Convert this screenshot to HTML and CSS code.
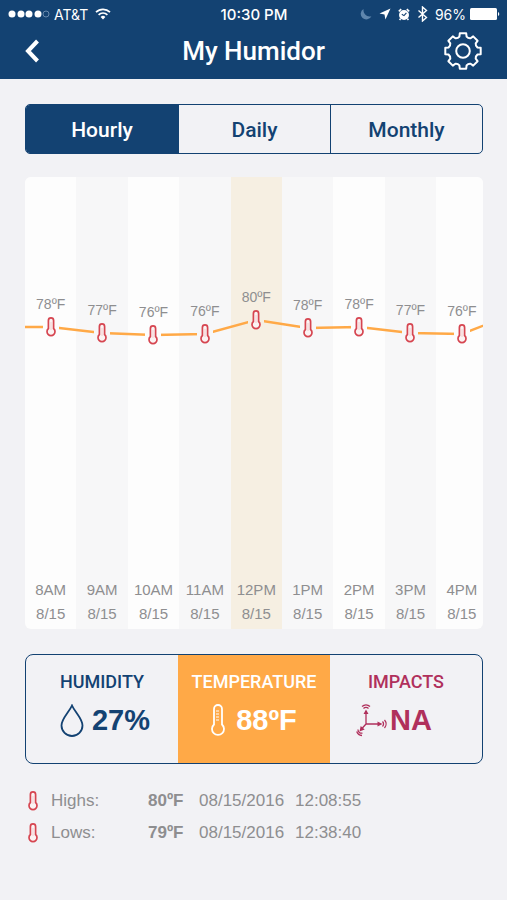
FILE: index.html
```html
<!DOCTYPE html>
<html lang="en">
<head>
  <meta charset="UTF-8">
  <meta name="viewport" content="width=device-width, initial-scale=1.0">
  <title>My Humidor</title>
  <link rel="stylesheet" href="styles.css">
</head>
<body>
  <!-- Shared thermometer icon -->
  <svg class="symbols" aria-hidden="true">
    <symbol id="thermometer" viewBox="0 0 10 20">
      <path d="M2.4 11.500V3.500a2.600 2.600 0 0 1 5.200 0V11.500a4 4 0 1 1-5.200 0z" fill="#fbf3f3" stroke="currentColor" stroke-width="1.7"/>
      <path d="M5 5v8" stroke="currentColor" stroke-width="0.8" opacity="0.25"/>
    </symbol>
  </svg>

  <header>
    <div class="status-bar">
      <div class="status-left">
        <svg width="42" height="10" viewBox="0 0 42 10" fill="#fff">
          <circle cx="4" cy="5" r="3.5"/><circle cx="13" cy="5" r="3.5"/><circle cx="21" cy="5" r="3.5"/><circle cx="30" cy="5" r="3.5"/>
          <circle cx="38" cy="5" r="3" fill="none" stroke="#7d9cbc" stroke-width="0.8"/>
        </svg>
        <span>AT&amp;T</span>
        <svg class="wifi" width="16" height="12" viewBox="0 0 16 12" fill="none" stroke="#fff" stroke-width="1.7">
          <path d="M1 4.2a10 10 0 0 1 14 0M3.6 6.8a6.3 6.3 0 0 1 8.8 0"/>
          <path d="M8 11.5 5.6 9a3.5 3.5 0 0 1 4.8 0z" fill="#fff" stroke="none"/>
        </svg>
      </div>
      <span class="status-time">10:30 PM</span>
      <div class="status-right">
        <svg width="12" height="12" viewBox="0 0 12 12"><path d="M3.500 1A5.600 5.600 0 1 0 11.400 8.200C7 9.600 3 6 3.500 1z" fill="#5f86ad"/></svg>
        <svg width="12" height="12" viewBox="0 0 12 12"><path d="M11.500.5.5 5.600l5 .9.9 5z" fill="#fff"/></svg>
        <svg width="12" height="13" viewBox="0 0 12 13">
          <circle cx="6" cy="7" r="5" fill="#fff"/>
          <path d="M.8 3.4 3.2 1.2M11.2 3.4 8.8 1.2M2.6 10.6l-1 1.4M9.4 10.6l1 1.4" stroke="#fff" stroke-width="1.6"/>
          <path d="M3.800 6.200 6 7.600l2.400-2.800" fill="none" stroke="#134272" stroke-width="1.1"/>
        </svg>
        <svg width="11" height="16" viewBox="0 0 11 16"><path d="m1.5 4.5 8 7L5.5 15V1l4 3.5-8 7" fill="none" stroke="#fff" stroke-width="1.4"/></svg>
        <span class="battery">96%
          <svg width="30" height="12" viewBox="0 0 30 12" fill="#fff"><rect width="27" height="12" rx="1.5"/><path d="M28 4a2.2 2.2 0 0 1 0 4z"/></svg>
        </span>
      </div>
    </div>
    <div class="title-bar">
      <button class="icon-btn" aria-label="Back">
        <svg width="15" height="24" viewBox="0 0 15 24"><path d="M12.5 2 3 12l9.5 10" fill="none" stroke="#fff" stroke-width="4"/></svg>
      </button>
      <h1>My Humidor</h1>
      <button class="icon-btn" aria-label="Settings">
        <svg width="38" height="38" viewBox="-19 -19 38 38" fill="none" stroke="#fff" stroke-width="2" stroke-linejoin="round">
          <path d="M14.4-3.6 17.7-3.2V3.2L14.4 3.6Q12.4 5.2 12.7 7.6L14.6 10.2 10.2 14.6 7.6 12.7Q5.2 12.4 3.6 14.4L3.2 17.7H-3.2L-3.6 14.4Q-5.2 12.4-7.6 12.7L-10.2 14.6-14.6 10.2-12.7 7.6Q-12.4 5.2-14.4 3.6L-17.7 3.2V-3.2L-14.4-3.6Q-12.4-5.2-12.7-7.6L-14.6-10.2-10.2-14.6-7.6-12.7Q-5.2-12.4-3.6-14.4L-3.2-17.7H3.2L3.6-14.4Q5.2-12.4 7.6-12.7L10.2-14.6 14.6-10.2 12.7-7.6Q12.4-5.2 14.4-3.6z"/>
          <circle r="6.8"/>
        </svg>
      </button>
    </div>
  </header>

  <main>
    <nav class="segments tabs">
      <button class="active">Hourly</button>
      <button>Daily</button>
      <button>Monthly</button>
    </nav>

    <div class="chart">
      <div class="chart-track" id="chartTrack">
        <svg class="chart-line" viewBox="0 0 900 452" preserveAspectRatio="none">
          <polyline id="chartLine" points=""/>
        </svg>
        <!-- Hour columns injected here -->
      </div>
    </div>

    <div class="segments readings">
      <button class="humidity">
        <span class="reading-name">HUMIDITY</span>
        <span class="reading-value">
          <svg width="24" height="33" viewBox="0 0 24 33"><path d="M12 1.5C9 8.500 1.500 14.500 1.500 21.500a10.500 10.500 0 0 0 21 0C22.500 14.500 15 8.500 12 1.500z" fill="none" stroke="currentColor" stroke-width="1.8"/></svg>
          27%
        </span>
      </button>
      <button class="temperature active">
        <span class="reading-name">TEMPERATURE</span>
        <span class="reading-value">
          <svg width="14" height="33" viewBox="0 0 14 33" fill="none" stroke="currentColor" stroke-width="1.8">
            <path d="M3 20.500V5a4 4 0 0 1 8 0v15.500a6 6 0 1 1-8 0z"/>
            <path d="M5 7h3M5 10h3M5 13h3M5 16h3" stroke-width="1"/>
          </svg>
          88ºF
        </span>
      </button>
      <button class="impacts">
        <span class="reading-name">IMPACTS</span>
        <span class="reading-value">
          <svg width="31" height="33" viewBox="0 0 31 33" fill="none" stroke="currentColor" stroke-width="1.3">
            <path d="M10 8v12h14M10 20l-4.500 5"/>
            <path d="M10 5.500 12.500 10h-5zM26.500 20l-5-2.500v5zM3.500 27.500l1.200-5.500 4 3.500z" fill="currentColor" stroke="none"/>
            <path d="M7.500 4.500a3.500 3.500 0 0 1 5 0M6 2.500a6 6 0 0 1 8 0M26.500 17.500a3.500 3.500 0 0 1 0 5M28.500 16a6 6 0 0 1 0 8M2 25.500a3.500 3.500 0 0 0 4.500 3.500M.7 27.500A6 6 0 0 0 6 31.500"/>
          </svg>
          NA
        </span>
      </button>
    </div>

    <table class="extremes">
      <tr>
        <th scope="row"><svg class="thermo" width="10" height="20"><use href="#thermometer"/></svg>Highs:</th>
        <td class="temp">80ºF</td>
        <td class="date">08/15/2016</td>
        <td>12:08:55</td>
      </tr>
      <tr>
        <th scope="row"><svg class="thermo" width="10" height="20"><use href="#thermometer"/></svg>Lows:</th>
        <td class="temp">79ºF</td>
        <td class="date">08/15/2016</td>
        <td>12:38:40</td>
      </tr>
    </table>
  </main>

  <script>
    // y is the height of the point inside the chart
    const hours = [
      { time: '8AM', temp: 78, y: 150 },
      { time: '9AM', temp: 77, y: 156 },
      { time: '10AM', temp: 76, y: 158 },
      { time: '11AM', temp: 76, y: 157 },
      { time: '12PM', temp: 80, y: 143, current: true },
      { time: '1PM', temp: 78, y: 151 },
      { time: '2PM', temp: 78, y: 150 },
      { time: '3PM', temp: 77, y: 156 },
      { time: '4PM', temp: 76, y: 157 }
    ];

    const track = document.getElementById('chartTrack');

    hours.forEach(hour => {
      track.innerHTML += `
        <div class="hour ${hour.current ? 'current' : ''}">
          <div class="point" style="padding-top: ${hour.y - 33}px">
            <span>${hour.temp}ºF</span>
            <div class="marker"><svg class="thermo" width="10" height="20"><use href="#thermometer"/></svg></div>
          </div>
          <div class="when">${hour.time}<br>8/15</div>
        </div>
      `;
    });

    // The line runs on past both ends of the visible hours
    const points = hours.map((hour, i) => `${i * 100 + 50},${hour.y}`);
    document.getElementById('chartLine').setAttribute('points', `-50,150 ${points.join(' ')} 950,137`);
  </script>
</body>
</html>
```

FILE: styles.css
```css
* {
  box-sizing: border-box;
}
body {
  margin: 0;
  background: #f2f2f5;
  color: #8e8e90;
  font-family: 'Liberation Sans', Arial, sans-serif;
}
button {
  margin: 0;
  padding: 0;
  border: none;
  background: none;
  color: inherit;
  font: inherit;
  cursor: pointer;
}
svg {
  display: block;
  flex: none;
}
.symbols {
  position: absolute;
  width: 0;
  height: 0;
}
header {
  background: #134272;
  color: #fff;
  padding-bottom: 6px;
}
.status-bar {
  display: grid;
  grid-template-columns: 1fr auto 1fr;
  align-items: center;
  height: 28px;
  padding: 0 7px 0 8px;
  font-family: Inter, sans-serif;
  font-size: 14px;
}
.status-left,
.status-right,
.battery {
  display: flex;
  align-items: center;
  gap: 7px;
}
.status-left,
.battery {
  gap: 4px;
}
.wifi {
  margin-left: 3px;
}
.status-right {
  justify-content: flex-end;
}
.status-time {
  font-size: 15px;
  font-weight: 500;
}
.title-bar {
  display: flex;
  align-items: center;
  justify-content: space-between;
  height: 45px;
  padding: 0 25px;
}
.title-bar h1 {
  margin: 0;
  font-family: Roboto, sans-serif;
  font-size: 26px;
  font-weight: 500;
}
.icon-btn {
  display: flex;
  width: 38px;
}
main {
  padding: 25px 24px 24px 25px;
}
.segments {
  display: grid;
  grid-template-columns: repeat(3, 1fr);
  border: 1px solid #134272;
  border-radius: 5px;
  overflow: hidden;
  color: #134272;
  font-family: Roboto, sans-serif;
}
.segments button + button {
  border-left: 1px solid #134272;
}
.tabs button {
  height: 48px;
  padding-top: 2px;
  font-size: 21px;
  font-weight: 500;
}
.tabs .active {
  background: #134272;
  color: #fff;
}
.chart {
  margin: 23px 0 25px;
  border-radius: 6px;
  overflow: hidden;
}
.chart-track {
  position: relative;
  display: grid;
  grid-template-columns: repeat(9, 1fr);
  width: 101%;
  height: 452px;
}
.chart-line {
  position: absolute;
  width: 100%;
  height: 100%;
}
.chart-line polyline {
  fill: none;
  stroke: #ffa947;
  stroke-width: 2.5px;
  vector-effect: non-scaling-stroke;
}
.hour {
  display: flex;
  flex-direction: column;
  justify-content: space-between;
  background: #f7f7f8;
  text-align: center;
}
.hour:nth-of-type(odd) {
  background: #fdfdfd;
}
.hour.current {
  background: #f6efe2;
}
.point {
  display: flex;
  flex-direction: column;
  align-items: center;
  gap: 3px;
  background: inherit;
  font-size: 14px;
  line-height: 20px;
}
.marker {
  position: relative;
  z-index: 1;
  padding: 0 3px;
  background: inherit;
}
.thermo {
  color: #d64550;
}
.when {
  padding-bottom: 3px;
  font-size: 15px;
  line-height: 24px;
}
.readings {
  border-radius: 8px;
}
.readings button {
  display: flex;
  flex-direction: column;
  align-items: center;
  height: 108px;
  padding-top: 15px;
}
.readings button + button {
  border: none;
}
.reading-name {
  font-size: 18px;
  font-weight: 500;
  line-height: 24px;
}
.reading-value {
  display: flex;
  align-items: center;
  gap: 8px;
  margin-top: 10px;
  font-family: 'Liberation Sans', Arial, sans-serif;
  font-size: 29px;
  font-weight: bold;
  line-height: 33px;
}
.humidity .reading-value {
  padding-left: 6px;
}
.temperature .reading-value {
  gap: 11px;
}
.temperature.active {
  background: #ffa947;
  color: #fff;
}
.impacts {
  color: #b0305c;
}
.impacts .reading-value {
  gap: 3px;
  padding-right: 24px;
}
.extremes {
  margin-top: 21px;
  border-collapse: collapse;
  font-size: 17px;
  line-height: 32px;
}
.extremes th,
.extremes td {
  padding: 0;
  font-weight: normal;
  text-align: left;
}
.extremes th {
  display: flex;
  align-items: center;
  gap: 13px;
  width: 123px;
  padding-left: 3px;
}
.extremes .temp {
  width: 51px;
  font-weight: bold;
}
.extremes .date {
  width: 96px;
}
```
